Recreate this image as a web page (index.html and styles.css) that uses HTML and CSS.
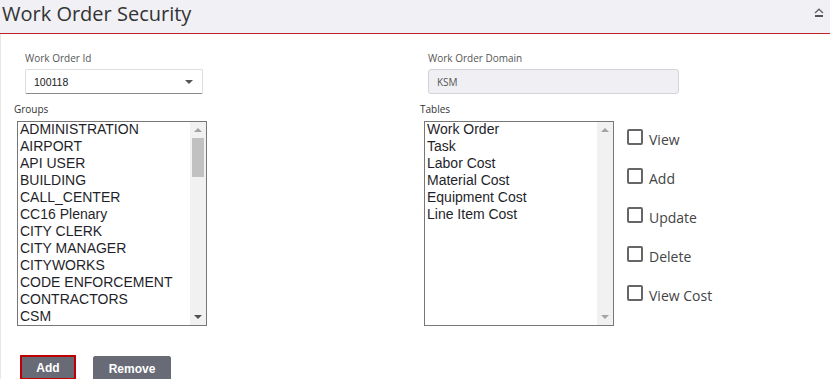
FILE: index.html
```html
<!DOCTYPE html>
<html lang="en">
<head>
    <meta charset="UTF-8">
    <meta name="viewport" content="width=device-width, initial-scale=1.0">
    <title>Work Order Security</title>
    <link rel="stylesheet" href="styles.css">
</head>
<body>
    <div class="panel">
        <div class="panel-header">
            <h2 class="panel-title">Work Order Security</h2>
            <svg class="collapse-icon" width="10" height="10" viewBox="0 0 10 10">
                <polyline points="1,5 5,1.2 9,5" fill="none" stroke="#666" stroke-width="1.4"/>
                <rect x="1" y="7" width="8" height="2" fill="#555"/>
            </svg>
        </div>

        <div class="panel-body">
            <div class="form-row">
                <div class="field field-id">
                    <label class="field-label">Work Order Id</label>
                    <div class="select">
                        <span>100118</span>
                        <span class="caret"></span>
                    </div>
                </div>
                <div class="field field-domain">
                    <label class="field-label">Work Order Domain</label>
                    <div class="domain-input">KSM</div>
                </div>
            </div>

            <div class="list-row">
                <div class="list-group">
                    <div class="list-label">Groups</div>
                    <div class="listbox">
                        <div class="list-items">
                            <div>ADMINISTRATION</div>
                            <div>AIRPORT</div>
                            <div>API USER</div>
                            <div>BUILDING</div>
                            <div>CALL_CENTER</div>
                            <div>CC16 Plenary</div>
                            <div>CITY CLERK</div>
                            <div>CITY MANAGER</div>
                            <div>CITYWORKS</div>
                            <div>CODE ENFORCEMENT</div>
                            <div>CONTRACTORS</div>
                            <div>CSM</div>
                        </div>
                        <div class="scrollbar">
                            <div class="scroll-arrow up"></div>
                            <div class="scroll-thumb"></div>
                            <div class="scroll-track"></div>
                            <div class="scroll-arrow down"></div>
                        </div>
                    </div>
                </div>

                <div class="list-group tables">
                    <div class="list-label">Tables</div>
                    <div class="tables-row">
                        <div class="listbox">
                            <div class="list-items">
                                <div>Work Order</div>
                                <div>Task</div>
                                <div>Labor Cost</div>
                                <div>Material Cost</div>
                                <div>Equipment Cost</div>
                                <div>Line Item Cost</div>
                            </div>
                            <div class="scrollbar">
                                <div class="scroll-arrow up"></div>
                                <div class="scroll-track"></div>
                                <div class="scroll-arrow down disabled"></div>
                            </div>
                        </div>
                        <div class="check-list">
                            <label class="check-item"><span class="checkbox"></span><span class="check-text">View</span></label>
                            <label class="check-item"><span class="checkbox"></span><span class="check-text">Add</span></label>
                            <label class="check-item"><span class="checkbox"></span><span class="check-text">Update</span></label>
                            <label class="check-item"><span class="checkbox"></span><span class="check-text">Delete</span></label>
                            <label class="check-item"><span class="checkbox"></span><span class="check-text">View Cost</span></label>
                        </div>
                    </div>
                </div>
            </div>

            <div class="actions">
                <button class="btn btn-add">Add</button>
                <button class="btn btn-remove">Remove</button>
            </div>
        </div>
    </div>
</body>
</html>
```
FILE: styles.css
```css
body {
    margin: 0;
    font-family: "Open Sans", Arial, sans-serif;
    background: #fff;
}
.panel {
    width: 830px;
}
.panel-header {
    display: flex;
    justify-content: space-between;
    align-items: flex-start;
    height: 33px;
    background-color: #f0f0f5;
    border-bottom: 1px solid #c1222c;
}
.panel-title {
    margin: 0;
    padding-left: 2px;
    font-size: 20px;
    font-weight: 400;
    line-height: 27px;
    color: #333;
}
.collapse-icon {
    margin: 8px 6px 0 0;
}
.panel-body {
    padding: 17px 0 0 13px;
    border-left: 1px solid #e6e6ec;
}
.form-row, .list-row {
    display: grid;
    grid-template-columns: 406px 1fr;
}
.field-id {
    padding-left: 11px;
}
.field-domain {
    padding-left: 8px;
}
.field-label {
    display: block;
    font-size: 10px;
    line-height: 14px;
    color: #555;
    margin-bottom: 4px;
}
.select {
    display: flex;
    justify-content: space-between;
    align-items: center;
    box-sizing: border-box;
    width: 178px;
    height: 25px;
    padding: 0 9px 0 8px;
    border: 1px solid #ddd;
    border-bottom-color: #8a8a8a;
    border-radius: 2px;
    font-family: "Liberation Sans", Arial, sans-serif;
    font-size: 10.5px;
    color: #1a1a1a;
}
.caret {
    width: 0;
    height: 0;
    border-left: 4px solid transparent;
    border-right: 4px solid transparent;
    border-top: 4px solid #555;
}
.domain-input {
    display: flex;
    align-items: center;
    box-sizing: border-box;
    width: 251px;
    height: 25px;
    padding-left: 8px;
    background-color: #f0f0f4;
    border: 1px solid #d2d2d8;
    border-radius: 3px;
    font-size: 10px;
    color: #555;
}
.list-row {
    margin-top: 8px;
}
.list-label {
    font-size: 10px;
    line-height: 14px;
    color: #333;
    margin-bottom: 5px;
}
.listbox {
    display: flex;
    box-sizing: border-box;
    width: 190px;
    height: 205px;
    margin-left: 3px;
    border: 1px solid #777;
}
.tables .listbox {
    margin-left: 4px;
}
.list-items {
    flex: 1;
    overflow: hidden;
    padding-left: 2px;
    font-family: "Liberation Sans", Arial, sans-serif;
    font-size: 14px;
    line-height: 17px;
    color: #1f1f2a;
    white-space: nowrap;
}
.list-items div {
    position: relative;
    top: -1px;
}
.scrollbar {
    display: flex;
    flex-direction: column;
    align-items: center;
    width: 16px;
    background-color: #f1f1f1;
}
.scroll-arrow {
    display: flex;
    align-items: center;
    justify-content: center;
    height: 16px;
    width: 16px;
}
.scroll-arrow::before {
    content: "";
    border-left: 4px solid transparent;
    border-right: 4px solid transparent;
}
.scroll-arrow.up::before {
    border-bottom: 4px solid #a3a3a3;
}
.scroll-arrow.down::before {
    border-top: 4px solid #505050;
}
.scroll-arrow.down.disabled::before {
    border-top-color: #a3a3a3;
}
.scroll-thumb {
    width: 12px;
    height: 39px;
    background-color: #c1c1c1;
}
.scroll-track {
    flex: 1;
}
.tables-row {
    display: flex;
}
.check-list {
    display: flex;
    flex-direction: column;
    gap: 19px;
    padding-top: 8px;
    margin-left: 13px;
}
.check-item {
    display: flex;
    align-items: flex-start;
    gap: 6px;
    height: 20px;
    font-size: 14px;
    color: #444;
}
.check-text {
    line-height: 19px;
    margin-top: 1px;
}
.checkbox {
    box-sizing: border-box;
    width: 16px;
    height: 16px;
    border: 2px solid #666;
    border-radius: 2px;
}
.actions {
    display: flex;
    gap: 17px;
    margin-top: 29px;
    padding-left: 6px;
}
.btn {
    height: 25px;
    padding: 0;
    font-family: "Liberation Sans", Arial, sans-serif;
    font-size: 12px;
    font-weight: bold;
    color: #fff;
    background-color: #686b76;
    border: 1px solid #686b76;
    border-radius: 0;
}
.btn-add {
    width: 56px;
    border: 2px solid #c00000;
}
.btn-remove {
    width: 78px;
    margin-top: 1px;
    border-radius: 2px;
}
```
